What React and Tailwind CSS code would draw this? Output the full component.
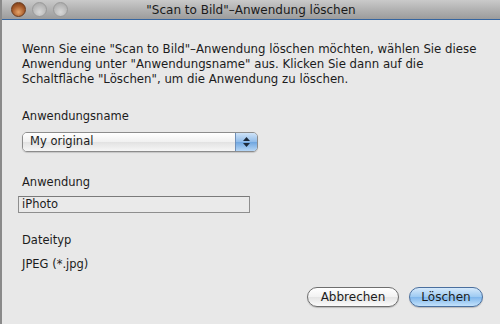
import { useState } from 'react';

const font = { fontFamily: '"DejaVu Sans", "Liberation Sans", sans-serif' };

function TrafficLights() {
  return (
    <div className="flex items-center gap-[6px] pl-[9px]">
      <span className="w-[15px] h-[15px] rounded-full border border-[#6b3a1c] bg-[radial-gradient(circle_at_50%_70%,#e6a46a_0%,#a55a2a_55%,#6e3514_100%)]" />
      <span className="w-[15px] h-[15px] rounded-full border border-[#9a9a9a] bg-[radial-gradient(circle_at_50%_70%,#d8d8d8_0%,#b8b8b8_60%,#a2a2a2_100%)]" />
      <span className="w-[15px] h-[15px] rounded-full border border-[#9a9a9a] bg-[radial-gradient(circle_at_50%_70%,#d8d8d8_0%,#b8b8b8_60%,#a2a2a2_100%)]" />
    </div>
  );
}

export default function App() {
  const [app, setApp] = useState('My original');

  return (
    <div className="w-[500px] h-[324px] flex flex-col bg-[#e8e8e8] text-[#1c1c1c] overflow-hidden border-l-2 border-[#8a8a8a]" style={font}>
      {/* Title bar */}
      <div className="relative h-[20px] shrink-0 flex items-center bg-[linear-gradient(#cacaca,#b4b4b4_45%,#9c9c9c)] border-b border-[#3565a0]">
        <TrafficLights />
        <span className="absolute inset-x-0 text-center text-[12px] leading-none text-[#1a1a1a]">
          "Scan to Bild"–Anwendung löschen
        </span>
      </div>

      {/* Body */}
      <div className="flex-1 flex flex-col pl-[20px] pr-[16px] pt-[22px]">
        <p className="text-[11.75px] leading-[15px] whitespace-nowrap">
          Wenn Sie eine "Scan to Bild"–Anwendung löschen möchten, wählen Sie diese
          <br />
          Anwendung unter "Anwendungsname" aus. Klicken Sie dann auf die
          <br />
          Schaltfläche "Löschen", um die Anwendung zu löschen.
        </p>

        <span className="mt-[22px] text-[11.5px] leading-[15px]">Anwendungsname</span>
        <div className="mt-[8px] w-[236px] h-[20px] flex rounded-[5px] border border-[#8c8c8c] overflow-hidden shadow-[0_1px_1px_rgba(0,0,0,0.15)]">
          <div className="flex-1 flex items-center pl-[7px] text-[11.5px] bg-[linear-gradient(#ffffff,#f0f0f0_50%,#e2e2e2_51%,#f6f6f6)]">
            {app}
          </div>
          <div className="w-[22px] flex flex-col items-center justify-center gap-[2px] border-l border-[#6f8fb8] bg-[linear-gradient(#cfe3f8,#8fbbe9_50%,#6fa6e0_51%,#b6d6f6)]">
            <svg width="7" height="4" viewBox="0 0 7 4"><path d="M3.5 0L7 4H0z" fill="#1d2a3a" /></svg>
            <svg width="7" height="4" viewBox="0 0 7 4"><path d="M0 0h7L3.5 4z" fill="#1d2a3a" /></svg>
          </div>
        </div>

        <span className="mt-[23px] text-[11.5px] leading-[15px]">Anwendung</span>
        <div className="mt-[6px] -ml-[4px] w-[232px] h-[17px] flex items-center pl-[3px] text-[11.5px] bg-[#eaeaea] border border-[#8e8e8e] border-t-[#7a7a7a]">
          iPhoto
        </div>

        <span className="mt-[20px] text-[11.5px] leading-[15px]">Dateityp</span>
        <span className="mt-[9px] text-[11.5px] leading-[15px]">JPEG (*.jpg)</span>

        <div className="mt-[15px] flex justify-end gap-[10px] pr-[1px]">
          <button
            onClick={() => setApp('My original')}
            className="w-[92px] h-[20px] rounded-full border border-[#6e6e6e] text-[12px] leading-none bg-[linear-gradient(#ffffff,#f2f2f2_50%,#e4e4e4_51%,#fbfbfb)] shadow-[0_1px_1px_rgba(0,0,0,0.2)]"
            style={font}
          >
            Abbrechen
          </button>
          <button
            className="w-[74px] h-[20px] rounded-full border border-[#4a6f9e] text-[12px] leading-none bg-[linear-gradient(#d6e9fb,#9ccaf2_50%,#7fb6ec_51%,#c3e2fb)] shadow-[0_1px_1px_rgba(0,0,0,0.2)]"
            style={font}
          >
            Löschen
          </button>
        </div>
      </div>
    </div>
  );
}
